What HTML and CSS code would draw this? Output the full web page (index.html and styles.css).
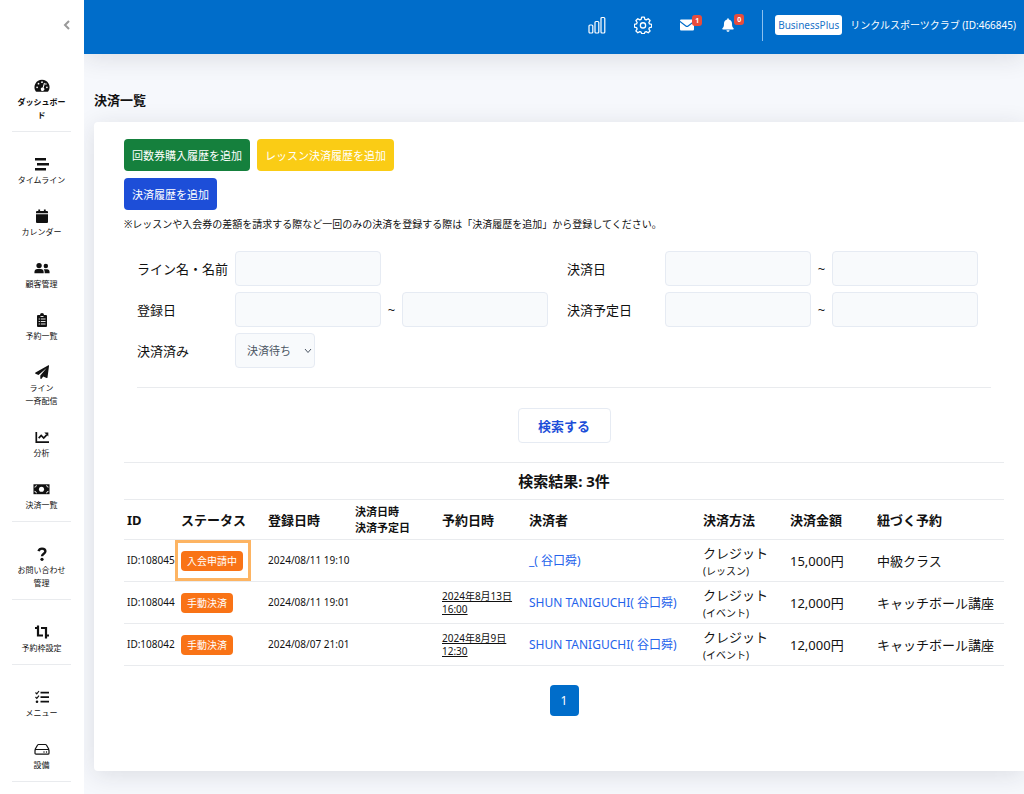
FILE: index.html
```html
<!DOCTYPE html>
<html lang="ja">
<head>
  <meta charset="UTF-8" />
  <title>決済一覧</title>
  <meta name="viewport" content="width=device-width, initial-scale=1.0" />
  <link rel="stylesheet" href="styles.css">
</head>
<body>

<div class="layout">
  <aside class="sidebar">
    <div class="sidebar-head">
      <button type="button" class="collapse" aria-label="閉じる">
        <svg viewBox="0 0 8 10" width="8" height="10"><path d="M6 1 2 5l4 4" fill="none" stroke="currentColor" stroke-width="2"/></svg>
      </button>
    </div>
    <nav class="menu">
      <a href="#" class="menu-item active">
        <svg viewBox="0 0 18 16" width="16" height="14"><path d="M9 1a8.500 8.500 0 0 0-7.400 12.800c.2.400.6.700 1.100.700h12.600c.5 0 .9-.3 1.100-.7A8.500 8.500 0 0 0 9 1z" fill="currentColor"/><g fill="#fff"><circle cx="9" cy="3.600" r="1"/><circle cx="5" cy="5.300" r="1"/><circle cx="3.400" cy="9.500" r="1"/><circle cx="14.600" cy="9.500" r="1"/><circle cx="13.500" cy="5.800" r=".9"/><path d="m11.300 4.400-1.600 5.200a2 2 0 1 0 1.200.5l1.500-5.300z"/></g></svg>
        <span>ダッシュボード</span>
      </a>
      <hr>
      <a href="#" class="menu-item">
        <svg viewBox="0 0 16 14" width="16" height="14"><path d="M1 1h11v2.600H1zM3 6h12v2.600H3zM1 11h11v2.600H1z" fill="currentColor"/></svg>
        <span>タイムライン</span>
      </a>
      <a href="#" class="menu-item">
        <svg viewBox="0 0 14 14" width="14" height="14"><path d="M1 4.200V3a1 1 0 0 1 1-1h1.300V.5h1.800V2h3.800V.5h1.800V2H12a1 1 0 0 1 1 1v1.200zM1 5.200h12V13a1 1 0 0 1-1 1H2a1 1 0 0 1-1-1z" fill="currentColor"/></svg>
        <span>カレンダー</span>
      </a>
      <a href="#" class="menu-item">
        <svg viewBox="0 0 18 14" width="16" height="14"><g fill="currentColor"><circle cx="5.700" cy="4.300" r="3"/><circle cx="13.300" cy="4.800" r="2.500"/><path d="M.5 13v-1.500c0-2 1.500-3.300 3.300-3.300h3.800c1.900 0 3.300 1.400 3.300 3.300V13zM12 13v-1.500c0-1.200-.4-2.200-1.100-3h4c1.500 0 2.600 1.200 2.600 2.700V13z"/></g></svg>
        <span>顧客管理</span>
      </a>
      <a href="#" class="menu-item">
        <svg viewBox="0 0 12 14" width="12" height="14"><path d="M1 3a1 1 0 0 1 1-1h2a2 2 0 0 1 4 0h2a1 1 0 0 1 1 1v10a1 1 0 0 1-1 1H2a1 1 0 0 1-1-1z" fill="currentColor"/><path d="M2.700 6h1.200M2.700 8.500h1.200M2.700 11h1.200M4.800 6h4.700M4.800 8.500h4.700M4.800 11h4.700M4.500 3.500h3" stroke="#fff" stroke-width=".9"/></svg>
        <span>予約一覧</span>
      </a>
      <a href="#" class="menu-item">
        <svg viewBox="0 0 14 14" width="14" height="14"><path d="M13.400.2.500 7.600c-.5.300-.4.900 0 1.100l3 1.300L11.600 3 5.300 10.600v2.700c0 .7.800.9 1.200.4l1.700-2.200 3.400 1.400c.4.200.8 0 .9-.5L14 .9c.1-.5-.2-.9-.6-.7z" fill="currentColor"/></svg>
        <span>ライン<br>一斉配信</span>
      </a>
      <a href="#" class="menu-item">
        <svg viewBox="0 0 14 14" width="14" height="14"><path d="M1.300 2v10.200H14M3.700 8.200l2.500-2.700 2.500 2.600 3-3.200" fill="none" stroke="currentColor" stroke-width="1.700"/><path d="M9.300 2.500h4v4z" fill="currentColor"/></svg>
        <span>分析</span>
      </a>
      <a href="#" class="menu-item">
        <svg viewBox="0 0 18 14" width="17" height="14"><path d="M.5 2h17v10.500H.5z" fill="currentColor"/><circle cx="9" cy="7.200" r="2.700" fill="#fff"/><path d="M1.600 5a2 2 0 0 0 2-2M16.400 5a2 2 0 0 1-2-2M1.600 9.500a2 2 0 0 1 2 2M16.400 9.500a2 2 0 0 0-2 2" fill="none" stroke="#fff"/></svg>
        <span>決済一覧</span>
      </a>
      <hr>
      <a href="#" class="menu-item">
        <svg viewBox="0 0 12 14" width="12" height="14"><path d="M2.500 4.200C3 2.600 4.300 1.600 6 1.600c2 0 3.400 1.100 3.400 2.700C9.400 6.800 6 6.700 6 9.300" fill="none" stroke="currentColor" stroke-width="2.400"/><circle cx="6" cy="12.300" r="1.600" fill="currentColor"/></svg>
        <span>お問い合わせ管理</span>
      </a>
      <hr>
      <a href="#" class="menu-item">
        <svg viewBox="0 0 16 14" width="16" height="14"><path d="M4 .5v10h5M1 3h3M7 3h5v10.500M12 10.500h3" fill="none" stroke="currentColor" stroke-width="2.200"/></svg>
        <span>予約枠設定</span>
      </a>
      <hr>
      <a href="#" class="menu-item">
        <svg viewBox="0 0 14 14" width="14" height="14"><path d="M5.500 2.700H14M5.500 7.200H14M5.500 11.700H14" stroke="currentColor" stroke-width="1.800"/><path d="m.5 2.500 1.300 1.300L4 1M.5 7l1.300 1.300L4 5.600" fill="none" stroke="currentColor" stroke-width="1.200"/><circle cx="2" cy="11.700" r="1.300" fill="currentColor"/></svg>
        <span>メニュー</span>
      </a>
      <a href="#" class="menu-item">
        <svg viewBox="0 0 16 14" width="16" height="14"><path d="M1 7.500 3.600 3c.2-.4.500-.5.900-.5h7c.4 0 .7.100.9.500L15 7.500M2 7.500h12a1 1 0 0 1 1 1v2.700a1 1 0 0 1-1 1H2a1 1 0 0 1-1-1V8.500a1 1 0 0 1 1-1z" fill="none" stroke="currentColor" stroke-width="1.200"/><circle cx="10" cy="10" r=".7"/><circle cx="12.500" cy="10" r=".7"/></svg>
        <span>設備</span>
      </a>
      <hr>
    </nav>
  </aside>

  <div class="main">
    <header class="topbar">
      <div class="top-icons">
        <a href="#" class="top-icon" aria-label="統計">
          <svg viewBox="0 0 18 18" width="18" height="18"><g fill="none" stroke="currentColor" stroke-width="1.200"><rect x="1" y="9" width="3.800" height="8" rx="1"/><rect x="7" y="5.500" width="3.800" height="11.500" rx="1"/><rect x="13" y="1.500" width="3.800" height="15.500" rx="1"/></g></svg>
        </a>
        <a href="#" class="top-icon" aria-label="設定">
          <svg viewBox="0 0 24 24" width="18" height="18"><g fill="none" stroke="currentColor" stroke-width="1.700" stroke-linejoin="round"><path d="M10.200 1.500h3.600l.7 2.900 1.800.8 2.600-1.600 2.500 2.500-1.600 2.600.8 1.800 2.900.7v3.600l-2.900.7-.8 1.800 1.600 2.600-2.500 2.500-2.600-1.600-1.800.8-.7 1.900h-3.600l-.7-1.900-1.800-.8-2.600 1.600-2.500-2.500 1.600-2.600-.8-1.800-2.900-.7v-3.600l2.900-.7.8-1.800-1.600-2.600 2.500-2.500 2.600 1.600 1.800-.8z"/><circle cx="12" cy="12.500" r="3.500"/></g></svg>
        </a>
        <a href="#" class="top-icon" aria-label="メッセージ">
          <svg viewBox="0 0 14 12" width="14" height="12"><path d="M1.300.5h11.400c.7 0 1.300.5 1.300 1.200L7.800 6.400c-.5.400-1.100.4-1.600 0L0 1.700C0 1 .6.500 1.300.5zM0 3.200l5.500 4.200c.9.700 2.100.7 3 0L14 3.200v7c0 .7-.6 1.300-1.300 1.300H1.300C.6 11.500 0 10.900 0 10.200z" fill="currentColor"/></svg>
          <span class="count">1</span>
        </a>
        <a href="#" class="top-icon" aria-label="お知らせ">
          <svg viewBox="0 0 12 14" width="12" height="14"><path d="M6 .3c.5 0 .8.300.8.800v.4C8.800 1.900 10 3.500 10 5.400c0 3 .6 3.900 1.500 4.800.6.600.2 1.400-.5 1.400H1c-.7 0-1.100-.8-.5-1.400C1.400 9.300 2 8.400 2 5.400c0-1.900 1.200-3.500 3.200-3.900v-.4c0-.5.3-.8.800-.8zM4.500 12.300h3c0 2-3 2-3 0z" fill="currentColor"/></svg>
          <span class="count">0</span>
        </a>
      </div>
      <div class="account">
        <span class="plan">BusinessPlus</span>
        <span class="club">リンクルスポーツクラブ (ID:466845)</span>
      </div>
    </header>

    <main class="content">
      <h1 class="page-title">決済一覧</h1>

      <section class="card">
        <div class="actions">
          <button type="button" class="btn btn-green">回数券購入履歴を追加</button>
          <button type="button" class="btn btn-yellow">レッスン決済履歴を追加</button>
          <button type="button" class="btn btn-blue">決済履歴を追加</button>
        </div>
        <p class="note">※レッスンや入会券の差額を請求する際など一回のみの決済を登録する際は「決済履歴を追加」から登録してください。</p>

        <form class="search">
          <div class="fields">
            <div class="field">
              <label for="name">ライン名・名前</label>
              <input type="text" id="name">
            </div>
            <div class="field">
              <label for="paidFrom">決済日</label>
              <input type="text" id="paidFrom">
              <span class="tilde">~</span>
              <input type="text" id="paidTo" aria-label="決済日（終了）">
            </div>
            <div class="field">
              <label for="createdFrom">登録日</label>
              <input type="text" id="createdFrom">
              <span class="tilde">~</span>
              <input type="text" id="createdTo" aria-label="登録日（終了）">
            </div>
            <div class="field">
              <label for="dueFrom">決済予定日</label>
              <input type="text" id="dueFrom">
              <span class="tilde">~</span>
              <input type="text" id="dueTo" aria-label="決済予定日（終了）">
            </div>
            <div class="field">
              <label for="paid">決済済み</label>
              <div class="select">
                <select id="paid">
                  <option>決済待ち</option>
                </select>
                <svg viewBox="0 0 8 6" width="8" height="6"><path d="m1 1 3 3.500L7 1" fill="none" stroke="currentColor"/></svg>
              </div>
            </div>
          </div>
          <div class="submit">
            <button type="submit" class="btn-search">検索する</button>
          </div>
        </form>

        <h2 class="result-title">検索結果: 3件</h2>

        <table class="payments">
          <colgroup>
            <col class="col-id">
            <col class="col-std">
            <col class="col-std">
            <col class="col-std">
            <col class="col-std">
            <col>
            <col class="col-std">
            <col class="col-std">
            <col class="col-last">
          </colgroup>
          <thead>
            <tr>
              <th>ID</th>
              <th>ステータス</th>
              <th>登録日時</th>
              <th class="th-small">決済日時<br>決済予定日</th>
              <th>予約日時</th>
              <th>決済者</th>
              <th>決済方法</th>
              <th>決済金額</th>
              <th>紐づく予約</th>
            </tr>
          </thead>
          <tbody>
            <tr>
              <td class="small">ID:108045</td>
              <td><span class="badge highlight">入会申請中</span></td>
              <td class="small">2024/08/11 19:10</td>
              <td></td>
              <td></td>
              <td><a href="#" class="payer">_( 谷口舜)</a></td>
              <td>クレジット<small>(レッスン)</small></td>
              <td>15,000円</td>
              <td>中級クラス</td>
            </tr>
            <tr>
              <td class="small">ID:108044</td>
              <td><span class="badge">手動決済</span></td>
              <td class="small">2024/08/11 19:01</td>
              <td></td>
              <td class="small"><a href="#" class="date">2024年8月13日<br>16:00</a></td>
              <td><a href="#" class="payer">SHUN TANIGUCHI( 谷口舜)</a></td>
              <td>クレジット<small>(イベント)</small></td>
              <td>12,000円</td>
              <td>キャッチボール講座</td>
            </tr>
            <tr>
              <td class="small">ID:108042</td>
              <td><span class="badge">手動決済</span></td>
              <td class="small">2024/08/07 21:01</td>
              <td></td>
              <td class="small"><a href="#" class="date">2024年8月9日<br>12:30</a></td>
              <td><a href="#" class="payer">SHUN TANIGUCHI( 谷口舜)</a></td>
              <td>クレジット<small>(イベント)</small></td>
              <td>12,000円</td>
              <td>キャッチボール講座</td>
            </tr>
          </tbody>
        </table>

        <div class="pager">
          <button type="button" class="page">1</button>
        </div>
      </section>
    </main>
  </div>
</div>

</body>
</html>
```
FILE: styles.css
```css
* {
  box-sizing: border-box;
}

body {
  margin: 0;
  font-family: "Noto Sans", "Noto Sans CJK JP", sans-serif;
  font-size: 13px;
  line-height: 20px;
  color: #111;
  background: #f6f8fc;
}

h1, h2, p {
  margin: 0;
}

a {
  color: inherit;
  text-decoration: none;
}

button, input, select {
  font-family: inherit;
  margin: 0;
}

svg {
  display: block;
}

.layout {
  display: flex;
  min-height: 100vh;
}

/* sidebar */
.sidebar {
  position: relative;
  z-index: 1;
  flex: none;
  width: 84px;
  padding: 0 13px 0 12px;
  background: #fff;
}

.sidebar-head {
  display: flex;
  justify-content: flex-end;
  height: 66px;
  padding-top: 17px;
}

.collapse {
  width: 8px;
  height: 16px;
  padding: 0;
  border: 0;
  background: none;
  color: #999;
}

.menu hr {
  height: 1px;
  margin: 0 0 12px;
  border: 0;
  background: #e9ebee;
}

.menu-item {
  display: flex;
  flex-direction: column;
  align-items: center;
  gap: 2px;
  padding: 13px 4px 10px;
  font-size: 8px;
  line-height: 13px;
  text-align: center;
}

.menu-item.active {
  font-weight: bold;
}

/* top bar */
.main {
  flex: 1;
  min-width: 0;
}

.topbar {
  display: flex;
  align-items: center;
  justify-content: flex-end;
  height: 54px;
  padding: 0 8px 4px 0;
  background: #006dca;
  color: #fff;
  box-shadow: 0 4px 24px rgba(30, 30, 50, 0.12);
}

.top-icons {
  display: flex;
  align-items: center;
  gap: 28px;
  padding-right: 28px;
}

.top-icon {
  position: relative;
}

.count {
  position: absolute;
  top: -4px;
  left: 12px;
  padding: 0 3px;
  border-radius: 3px;
  background: #e74c3c;
  font-size: 7px;
  font-weight: bold;
  line-height: 11px;
}

.account {
  display: flex;
  align-items: center;
  gap: 8px;
  height: 31px;
  padding-left: 12px;
  border-left: 1px solid #8cc0ee;
}

.plan {
  padding: 0 3px;
  border-radius: 3px;
  background: #fff;
  color: #1a73c8;
  font-size: 10px;
}

.club {
  font-size: 10px;
}

/* content */
.content {
  padding: 36px 0 23px 10px;
}

.page-title {
  margin-bottom: 12px;
  font-size: 13px;
  line-height: 20px;
}

.card {
  min-height: 649px;
  padding: 17px 20px 30px 30px;
  border-radius: 4px 0 0 4px;
  background: #fff;
  box-shadow: 0 4px 24px rgba(30, 30, 50, 0.12);
}

.actions {
  display: flex;
  flex-wrap: wrap;
  gap: 7px;
  width: 40%;
}

.btn {
  height: 32px;
  padding: 0 8px;
  border: 0;
  border-radius: 4px;
  color: #fff;
  font-size: 11px;
}

.btn-green {
  background: #15803d;
}

.btn-yellow {
  background: #facc15;
}

.btn-blue {
  background: #1d4ed8;
}

.note {
  margin-top: 4px;
  font-size: 10px;
}

.search {
  padding: 17px 13px 19px;
  border-bottom: 1px solid #e9ebee;
}

.fields {
  display: grid;
  grid-template-columns: 1fr 1fr;
  gap: 6px;
  padding-bottom: 19px;
  border-bottom: 1px solid #e9ebee;
}

.field {
  display: flex;
  align-items: center;
}

.field label {
  flex: none;
  width: 98px;
}

.field input {
  width: 146px;
  height: 35px;
  border: 1px solid #e6ebf3;
  border-radius: 4px;
  background: #f8fafc;
}

.tilde {
  width: 21px;
  text-align: center;
}

.select {
  position: relative;
}

.select select {
  width: 80px;
  height: 35px;
  padding: 0 12px 0 11px;
  border: 1px solid #e6ebf3;
  border-radius: 4px;
  background: #f8fafc;
  color: #4b5563;
  font-size: 11px;
  appearance: none;
}

.select svg {
  position: absolute;
  top: 15px;
  right: 3px;
  color: #4b5563;
  pointer-events: none;
}

.submit {
  display: flex;
  justify-content: center;
  padding-top: 20px;
}

.btn-search {
  width: 93px;
  height: 35px;
  border: 1px solid #e6ebf3;
  border-radius: 4px;
  background: #fff;
  color: #1d4ed8;
  font-size: 13px;
  font-weight: bold;
}

.result-title {
  font-size: 15px;
  line-height: 36px;
  text-align: center;
}

/* table */
.payments {
  width: 100%;
  border-collapse: collapse;
  table-layout: fixed;
}

.col-id {
  width: 54px;
}

.col-std {
  width: 87px;
}

.col-last {
  width: 130px;
}

.payments tr {
  border-top: 1px solid #e9ebee;
  border-bottom: 1px solid #e9ebee;
}

.payments th, .payments td {
  padding: 0 3px;
  text-align: left;
  white-space: nowrap;
}

.payments th {
  height: 40px;
}

.payments td {
  height: 42px;
}

.payments .th-small {
  font-size: 11px;
  line-height: 16px;
}

.payments .small {
  font-size: 10px;
  line-height: 13px;
}

.payments small {
  display: block;
  font-size: 10px;
  line-height: 16px;
}

.badge {
  display: inline-block;
  position: relative;
  padding: 0 6px;
  border-radius: 4px;
  background: #f97316;
  color: #fff;
  font-size: 10px;
}

.highlight::after {
  content: "";
  position: absolute;
  inset: -11px -8px -10px -6px;
  border: 3px solid #fdb462;
}

.date {
  text-decoration: underline;
}

.payer {
  color: #2563eb;
  font-size: 12px;
}

.pager {
  display: flex;
  justify-content: center;
  padding-top: 19px;
}

.page {
  width: 29px;
  height: 31px;
  padding: 0;
  border: 0;
  border-radius: 4px;
  background: #006dca;
  color: #fff;
  font-size: 12px;
}
```
